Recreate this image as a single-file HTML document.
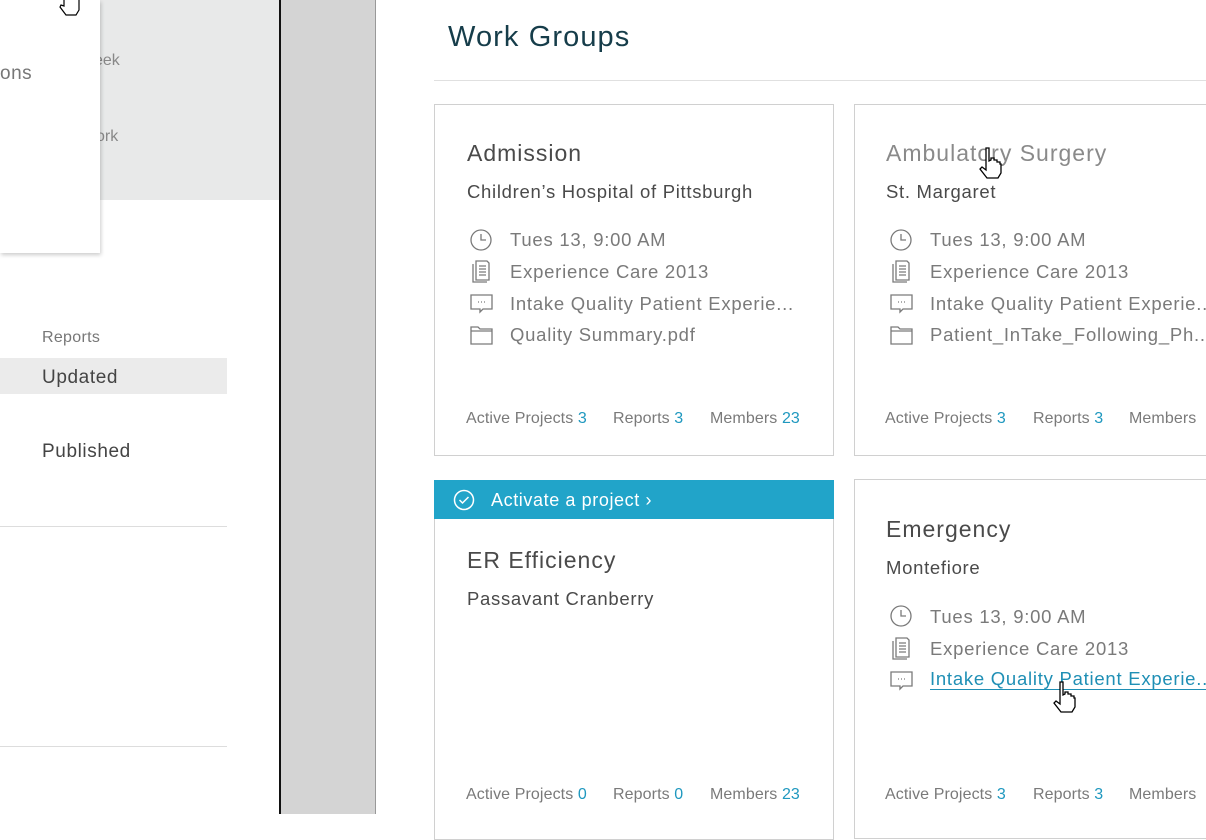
<!DOCTYPE html>
<html><head><meta charset="utf-8"><style>
*{margin:0;padding:0;box-sizing:border-box}
body{width:1206px;height:814px;overflow:hidden;background:#fff;font-family:"Liberation Sans",sans-serif;position:relative}
.a{position:absolute;white-space:nowrap}
.card{position:absolute;border:1px solid #d0d0d0;background:#fff}
.t{font-size:23px;color:#4a4a4a;letter-spacing:1px}
.s{font-size:18.5px;color:#4a4a4a;letter-spacing:0.7px}
.i{font-size:18.5px;color:#7a7a7a;letter-spacing:0.75px}
.f{font-size:16px;color:#7a7a7a;letter-spacing:0.1px}
.f b{font-weight:normal;color:#1f98bf}
svg.ic{position:absolute;fill:none;stroke:#7a7a7a;stroke-width:1.3}
</style></head><body>
<div class="a" style="left:0;top:0;width:279px;height:200px;background:#e8e9e9"></div>
<div class="a" style="left:94px;top:52px;font-size:16px;color:#888">eek</div>
<div class="a" style="left:96px;top:128px;font-size:16px;color:#888">ork</div>
<div class="a" style="left:0;top:0;width:100px;height:253px;background:#fff;box-shadow:1px 2px 4px rgba(0,0,0,.2)"></div>
<div class="a" style="left:0;top:63px;font-size:19px;color:#777;letter-spacing:0.5px">ons</div>
<svg class="a" style="left:58px;top:0" width="28" height="24" viewBox="0 0 28 24"><path d="M6 0v6l-3-1-1 2 6 8h10l3-5v-10" fill="#fff" stroke="#000" stroke-width="1.2"/></svg>
<div class="a" style="left:42px;top:329px;font-size:16px;color:#777;letter-spacing:0.3px">Reports</div>
<div class="a" style="left:0;top:358px;width:227px;height:36px;background:#ebebeb"></div>
<div class="a" style="left:42px;top:367px;font-size:19px;color:#444;letter-spacing:0.6px">Updated</div>
<div class="a" style="left:42px;top:441px;font-size:19px;color:#444;letter-spacing:0.6px">Published</div>
<div class="a" style="left:0;top:526px;width:227px;height:1px;background:#ddd"></div>
<div class="a" style="left:0;top:746px;width:227px;height:1px;background:#ddd"></div>
<div class="a" style="left:279px;top:0;width:2px;height:814px;background:#111"></div>
<div class="a" style="left:281px;top:0;width:94px;height:814px;background:#d4d4d4"></div>
<div class="a" style="left:375px;top:0;width:1px;height:814px;background:#999"></div>
<div class="a" style="left:448px;top:21px;font-size:29px;color:#163d4a;letter-spacing:1.1px">Work Groups</div>
<div class="a" style="left:434px;top:80px;width:772px;height:1px;background:#e0e0e0"></div>

<div class="card" style="left:434px;top:104px;width:400px;height:352px"></div>
<div class="card" style="left:854px;top:104px;width:360px;height:352px"></div>
<div class="card" style="left:434px;top:480px;width:400px;height:360px"></div>
<div class="a" style="left:434px;top:480px;width:400px;height:39px;background:#21a4c9"></div>
<svg class="a" style="left:453px;top:489px" width="22" height="22" viewBox="0 0 22 22"><circle cx="11" cy="11" r="9.5" fill="none" stroke="#fff" stroke-width="1.5"/><path d="M6.5 11l3 3 6-6" fill="none" stroke="#fff" stroke-width="1.5"/></svg>
<div class="a" style="left:491px;top:490px;font-size:18px;color:#fff;letter-spacing:0.6px">Activate a project ›</div>
<div class="card" style="left:854px;top:479px;width:360px;height:360px"></div>

<div class="a t" style="left:467px;top:140px">Admission</div>
<div class="a s" style="left:467px;top:181px">Children’s Hospital of Pittsburgh</div>
<div class="a i" style="left:510px;top:229px">Tues 13, 9:00 AM</div>
<div class="a i" style="left:510px;top:261px">Experience Care 2013</div>
<div class="a i" style="left:510px;top:293px">Intake Quality Patient Experie...</div>
<div class="a i" style="left:510px;top:324px">Quality Summary.pdf</div>
<div class="a f" style="left:466px;top:410px">Active Projects <b>3</b></div>
<div class="a f" style="left:613px;top:410px">Reports <b>3</b></div>
<div class="a f" style="left:710px;top:410px">Members <b>23</b></div>

<div class="a t" style="left:886px;top:140px;color:#8a8a8a">Ambulatory Surgery</div>
<div class="a s" style="left:886px;top:181px">St. Margaret</div>
<div class="a i" style="left:930px;top:229px">Tues 13, 9:00 AM</div>
<div class="a i" style="left:930px;top:261px">Experience Care 2013</div>
<div class="a i" style="left:930px;top:293px">Intake Quality Patient Experie...</div>
<div class="a i" style="left:930px;top:324px">Patient_InTake_Following_Ph...</div>
<div class="a f" style="left:885px;top:410px">Active Projects <b>3</b></div>
<div class="a f" style="left:1033px;top:410px">Reports <b>3</b></div>
<div class="a f" style="left:1129px;top:410px">Members</div>

<div class="a t" style="left:467px;top:547px">ER Efficiency</div>
<div class="a s" style="left:467px;top:588px">Passavant Cranberry</div>
<div class="a f" style="left:466px;top:786px">Active Projects <b>0</b></div>
<div class="a f" style="left:613px;top:786px">Reports <b>0</b></div>
<div class="a f" style="left:710px;top:786px">Members <b>23</b></div>

<div class="a t" style="left:886px;top:516px">Emergency</div>
<div class="a s" style="left:886px;top:557px">Montefiore</div>
<div class="a i" style="left:930px;top:606px">Tues 13, 9:00 AM</div>
<div class="a i" style="left:930px;top:638px">Experience Care 2013</div>
<div class="a i" style="left:930px;top:669px;color:#1f8fb5;border-bottom:1px solid #1f8fb5;line-height:20px">Intake Quality Patient Experie...</div>
<div class="a f" style="left:885px;top:786px">Active Projects <b>3</b></div>
<div class="a f" style="left:1033px;top:786px">Reports <b>3</b></div>
<div class="a f" style="left:1129px;top:786px">Members</div>

<svg width="0" height="0" style="position:absolute"><defs>
<g id="clk"><circle cx="12" cy="12" r="10"/><path d="M12 6v6h5"/></g>
<g id="doc"><path d="M4 5v18h14"/><path d="M7 2h11l2 2v17H7z"/><path d="M10 7h7M10 10h7M10 13h7M10 16h7"/></g>
<g id="cht"><path d="M2 4h21v14h-9l-3 3v-3H2z"/><path d="M9 11h1M12 11h1M15 11h1"/></g>
<g id="fld"><path d="M2 5h7l2 2h12v15H2z"/><path d="M2 9h21"/></g>
</defs></svg>
<svg class="ic" style="left:469px;top:228px" width="25" height="25"><use href="#clk"/></svg>
<svg class="ic" style="left:469px;top:259px" width="25" height="25"><use href="#doc"/></svg>
<svg class="ic" style="left:469px;top:291px" width="25" height="25"><use href="#cht"/></svg>
<svg class="ic" style="left:469px;top:322px" width="25" height="25"><use href="#fld"/></svg>
<svg class="ic" style="left:889px;top:228px" width="25" height="25"><use href="#clk"/></svg>
<svg class="ic" style="left:889px;top:259px" width="25" height="25"><use href="#doc"/></svg>
<svg class="ic" style="left:889px;top:291px" width="25" height="25"><use href="#cht"/></svg>
<svg class="ic" style="left:889px;top:322px" width="25" height="25"><use href="#fld"/></svg>
<svg class="ic" style="left:889px;top:604px" width="25" height="25"><use href="#clk"/></svg>
<svg class="ic" style="left:889px;top:636px" width="25" height="25"><use href="#doc"/></svg>
<svg class="ic" style="left:889px;top:668px" width="25" height="25"><use href="#cht"/></svg>
<svg class="a" style="left:978px;top:146px" width="30" height="36" viewBox="0 0 30 36"><path d="M8 2h3v13l2-1v-2h3v2h3v2h3v2l1 0v9l-3 5H9l-7-9 2-2 4 3z" fill="#fff" stroke="#000" stroke-width="1.3"/></svg>
<svg class="a" style="left:1052px;top:680px" width="30" height="36" viewBox="0 0 30 36"><path d="M8 2h3v13l2-1v-2h3v2h3v2h3v2l1 0v9l-3 5H9l-7-9 2-2 4 3z" fill="#fff" stroke="#000" stroke-width="1.3"/></svg>
</body></html>
